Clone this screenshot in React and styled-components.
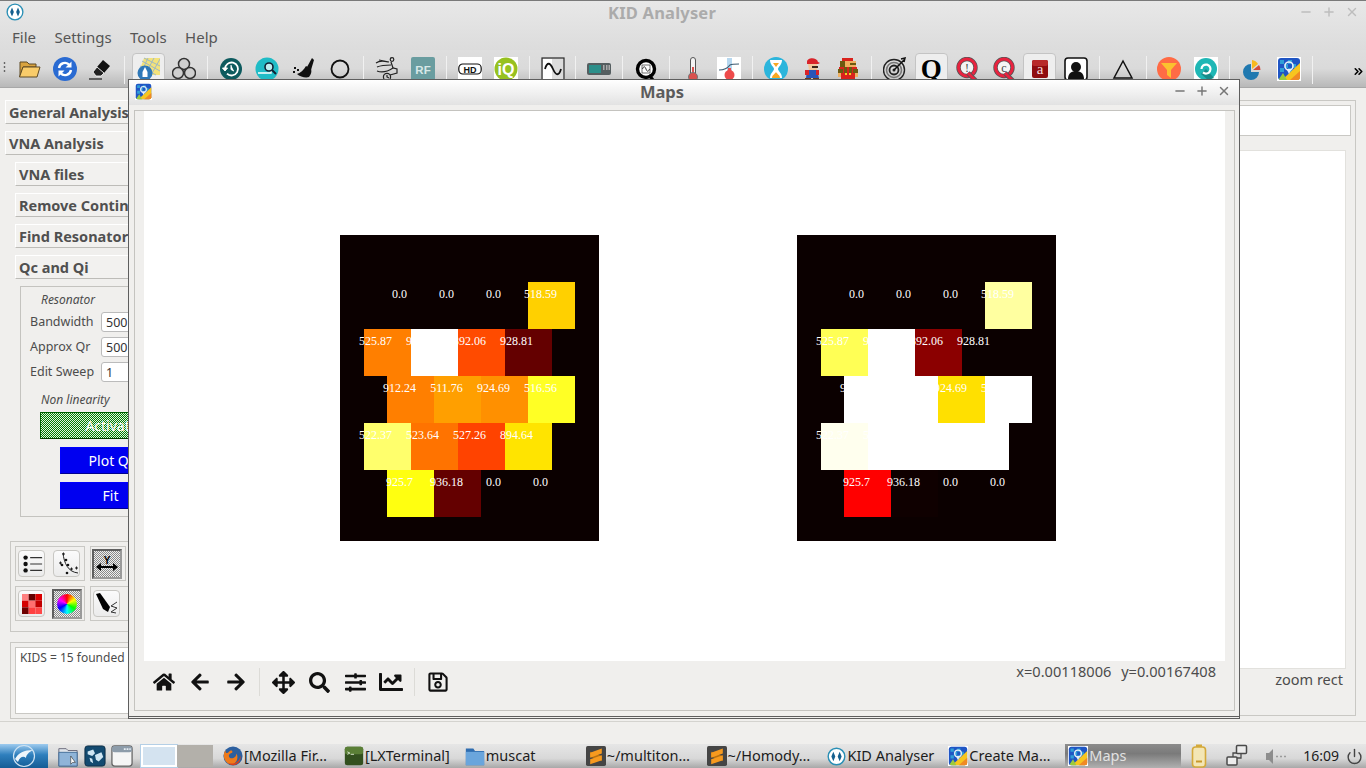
import React from "react";
import styled, { createGlobalStyle } from "styled-components";
import { Minus, Plus, X, ChevronsRight, Power } from "lucide-react";
import {
  FaHome,
  FaArrowLeft,
  FaArrowRight,
  FaArrowsAlt,
  FaSearch,
  FaSlidersH,
  FaChartLine,
  FaRegSave,
} from "react-icons/fa";

const Global = createGlobalStyle`
  html, body { margin: 0; padding: 0; overflow: hidden; background: #f0efed; }
  * { box-sizing: border-box; }
  body { font-family: "Noto Sans", "Open Sans", sans-serif; color: #4c4c4c; }
`;

const dither = (a, b) => `repeating-conic-gradient(${a} 0 25%, ${b} 0 50%) 0 0 / 2px 2px`;

// ---------- icons ----------

const Svg = ({ children, size = 24, vb = 24 }) => (
  <svg width={size} height={size} viewBox={`0 0 ${vb} ${vb}`}>
    {children}
  </svg>
);

const KidLogo = ({ size = 18 }) => (
  <Svg size={size}>
    <circle cx="12" cy="12" r="10.5" fill="#fff" stroke="#2a8fb5" strokeWidth="1.8" />
    <path d="M8 6l2.5 6L8 18l-2.5-6zM16 6l2.5 6-2.5 6-2.5-6z" fill="#15608f" />
  </Svg>
);

const MapLogo = ({ size = 24 }) => (
  <Svg size={size}>
    <rect x="0" y="0" width="24" height="24" fill="#fff" />
    <rect x="1" y="1" width="22" height="22" rx="3" fill="#1f55c4" />
    <path d="M3 3h4v4H3zM11 3h4v4h-4zM7 7h4v4H7zM15 7h4v4h-4zM3 11h4v4H3zM11 11h4v4h-4z" fill="#2f9fd6" />
    <path d="M23 6v14a3 3 0 0 1-3 3H5z" fill="#f7c51e" />
    <path d="M23 14v6a3 3 0 0 1-3 3h-7z" fill="#f08a24" />
    <path d="M2 22l4-6 4 7H3z" fill="#9ccb3b" />
    <circle cx="12" cy="9" r="4" fill="none" stroke="#e8eef8" strokeWidth="1.6" />
    <path d="M9.5 12l2.5 5 2.5-5z" fill="#e8eef8" />
  </Svg>
);

const FolderIcon = () => (
  <Svg>
    <path d="M3 5h7l2 2h7v3H6L3 20z" fill="#d9a33f" stroke="#5f4b25" />
    <path d="M6 10h17l-3 10H2.5z" fill="#f9cc6a" stroke="#5f4b25" />
  </Svg>
);

const RefreshIcon = () => (
  <Svg>
    <circle cx="12" cy="12" r="12" fill="#2a6bd2" />
    <path d="M6 11a6 6 0 0 1 10.5-3M18 13a6 6 0 0 1-10.5 3" fill="none" stroke="#fff" strokeWidth="2.4" />
    <path d="M18.5 4.500v6h-6zM5.500 19.500v-6h6z" fill="#fff" />
  </Svg>
);

const EraserIcon = () => (
  <Svg>
    <path d="M14 3l7 6-6 7-7-6z" fill="#111" />
    <path d="M8 10l7 6-3 3H7l-3-4z" fill="#222" stroke="#fff" strokeWidth="0.8" />
    <path d="M0 22h13" stroke="#333" strokeWidth="1.4" />
  </Svg>
);

const HexIcon = () => (
  <Svg>
    <path d="M8 1h16v17H2z" fill="#f3e27a" />
    <path d="M6 4l18 10M8 1l16 8M4 9l16 9M12 1L4 18M18 1L9 18M24 2l-9 16" stroke="#9fb8c4" strokeWidth="1" />
    <circle cx="9" cy="16" r="7.500" fill="#2f78b8" />
    <path d="M9 10l2.500 5v5h-5v-5z" fill="#fff" />
  </Svg>
);

const ThreeIcon = () => (
  <Svg>
    <g fill="#cfcfcf" stroke="#333" strokeWidth="1.5">
      <circle cx="12" cy="7" r="5.500" />
      <circle cx="6" cy="16" r="5.500" />
      <circle cx="18" cy="16" r="5.500" />
    </g>
  </Svg>
);

const HistoryIcon = () => (
  <Svg>
    <circle cx="12" cy="12" r="11" fill="#0d5a5e" />
    <path d="M6 12a6.500 6.500 0 1 1 2 4.700" fill="none" stroke="#fff" strokeWidth="1.8" />
    <path d="M3.500 11h5l-2.500 3zM12 8v4.500l3 1.500" fill="#fff" stroke="#fff" strokeWidth="1" />
  </Svg>
);

const LensIcon = () => (
  <Svg>
    <circle cx="12" cy="12" r="11.500" fill="#1fbcc6" />
    <path d="M3 16h13V7" fill="none" stroke="#fff" strokeWidth="1.400" />
    <circle cx="14" cy="10" r="4" fill="#bfeef0" stroke="#123" strokeWidth="1.600" />
    <path d="M17 13l4 4" stroke="#123" strokeWidth="2" />
  </Svg>
);

const BroomIcon = () => (
  <Svg>
    <path d="M20 1l-5 9 4 3 3-10z" fill="#111" />
    <path d="M14 9c-2 4-6 7-9 8 3 3 9 4 12 3 2-3 3-5 2-8z" fill="#111" />
    <path d="M2 10h2v2H2zM5 12h2v2H5zM1 14h2v2H1z" fill="#111" />
  </Svg>
);

const RingIcon = () => (
  <Svg>
    <circle cx="12" cy="12" r="8.500" fill="none" stroke="#111" strokeWidth="1.800" />
  </Svg>
);

const ScribbleIcon = () => (
  <Svg>
    <g fill="none" stroke="#222" strokeWidth="1.200">
      <path d="M1 6c4-3 8-2 12-1M2 10c5-2 9-2 14-2M4 3l10 2M2 14c5 2 10 1 16-3l4 1v4l-7 2" />
      <circle cx="17" cy="2.500" r="1.800" />
      <circle cx="12" cy="20" r="3.600" />
      <path d="M12 18v2l2 1M16 5l2 6" />
    </g>
  </Svg>
);

const RfIcon = () => (
  <Svg>
    <rect width="24" height="24" rx="2" fill="#6a9da0" />
    <text x="12" y="16.500" textAnchor="middle" fontFamily="Liberation Sans" fontWeight="700" fontSize="11.500" fill="#d8e8e8">
      RF
    </text>
  </Svg>
);

const HdIcon = () => (
  <Svg>
    <rect width="24" height="24" fill="#fff" />
    <rect x="0.800" y="7" width="22.400" height="10" rx="4" fill="none" stroke="#111" strokeWidth="1.200" />
    <text x="12" y="15.800" textAnchor="middle" fontFamily="Liberation Sans" fontWeight="700" fontSize="9" fill="#111">
      HD
    </text>
  </Svg>
);

const IqIcon = () => (
  <Svg>
    <rect width="24" height="24" fill="#fff" />
    <circle cx="12" cy="12" r="11.500" fill="#97c11f" />
    <text x="12" y="18" textAnchor="middle" fontFamily="Liberation Sans" fontWeight="700" fontSize="16" fill="#fff">
      iQ
    </text>
  </Svg>
);

const SineIcon = () => (
  <Svg>
    <rect width="24" height="24" fill="#fff" />
    <rect x="1" y="1" width="22" height="22" fill="none" stroke="#333" strokeWidth="1.400" />
    <rect x="11" y="2" width="11" height="20" fill="#dcdcdc" />
    <path d="M4 12c2-7 5-7 8 0s6 7 8 0" fill="none" stroke="#111" strokeWidth="1.800" />
  </Svg>
);

const ScopeIcon = () => (
  <Svg>
    <rect x="0" y="6" width="24" height="12" rx="2" fill="#555e60" />
    <rect x="2" y="8" width="12" height="8" fill="#2c8f8a" />
    <path d="M16 8h1.500v5H16zM19 8h1.500v5H19zM21.500 8H23v5h-1.500z" fill="#aaa" />
  </Svg>
);

const QSineIcon = () => (
  <Svg>
    <circle cx="12" cy="12" r="8.500" fill="#fff" stroke="#000" strokeWidth="3.400" />
    <path d="M15 18l4 5" stroke="#000" strokeWidth="3" />
    <rect x="8" y="8" width="8" height="8" fill="none" stroke="#333" strokeWidth="0.700" />
    <path d="M8.500 12c1-3 2.500-3 3.500 0s2.500 3 3.500 0" fill="none" stroke="#222" strokeWidth="0.900" />
  </Svg>
);

const ThermoIcon = () => (
  <Svg>
    <rect x="9.500" y="0.500" width="5" height="20" rx="2.500" fill="#f4f4f4" stroke="#555" />
    <rect x="11" y="10" width="2" height="10" fill="#d9514e" />
    <circle cx="12" cy="20" r="4.500" fill="#d9514e" stroke="#777" />
  </Svg>
);

const ThermoCurveIcon = () => (
  <Svg>
    <rect width="24" height="24" fill="#fff" />
    <rect x="10" y="1" width="5" height="14" fill="#b6d7ef" />
    <circle cx="12.500" cy="18" r="5" fill="#ee4b4b" />
    <rect x="11" y="11" width="3" height="6" fill="#ee4b4b" />
    <path d="M2 13c5 0 8-1 11-5 2-1 5-1 9-1" fill="none" stroke="#3a5a70" strokeWidth="1.200" />
  </Svg>
);

const HourglassIcon = () => (
  <Svg>
    <circle cx="12" cy="12" r="12" fill="#2cb5dc" />
    <path d="M6 3h12c0 5-4 7-4 9s4 4 4 9H6c0-5 4-7 4-9s-4-4-4-9z" fill="#fff" />
    <path d="M8 21c0-3 3-4 4-6 1 2 4 3 4 6zM9 6h6l-3 4z" fill="#f7a823" />
  </Svg>
);

const MarioIcon = () => (
  <Svg>
    <path d="M7 5c0-5 10-5 11 0l2 1-2 1H7z" fill="#d8232a" />
    <path d="M8 7h9v6H9z" fill="#f3c79c" />
    <path d="M12 9h6v2h-6z" fill="#3a241a" />
    <path d="M7 13h10l2 8H6z" fill="#2a55b8" />
    <path d="M5 13h4v5H5zM16 13h3v5h-3z" fill="#d8232a" />
    <path d="M5 21h6v3H5zM13 21h6v3h-6z" fill="#6a3a1a" />
  </Svg>
);

const PixelMarioIcon = () => (
  <Svg>
    <path d="M6 1h11v3H6zM3 10h18v8H3zM5 18h14v6H5z" fill="#d9221c" />
    <path d="M6 4h14v6H6z" fill="#f0b060" />
    <path d="M4 4h5v6H4zM14 6h6v2h-6z" fill="#6d5a10" />
    <path d="M8 10h3v6H8zM13 10h3v6h-3zM2 12h5v4H2zM17 12h5v4h-5z" fill="#6d5a10" />
    <path d="M2 16h3v4H2zM19 16h3v4h-3z" fill="#f0b060" />
    <path d="M9 16h2v2H9zM13 16h2v2h-2z" fill="#f5d020" />
  </Svg>
);

const TargetIcon = () => (
  <Svg>
    <g fill="none" stroke="#222">
      <circle cx="11" cy="13" r="10.500" strokeWidth="1.400" />
      <circle cx="11" cy="13" r="7.500" strokeWidth="1.600" stroke="#777" />
      <circle cx="11" cy="13" r="4.500" strokeWidth="1.800" />
    </g>
    <circle cx="11" cy="13" r="1.500" fill="#222" />
    <path d="M11 13L21 3M18 2l4-1-1 4" fill="none" stroke="#111" strokeWidth="1.500" />
  </Svg>
);

const SerifQ = styled.div`
  position: relative;
  font-family: "Liberation Serif", serif;
  font-weight: 700;
  font-size: 27px;
  line-height: 24px;
  color: #000;
`;

const RedQIcon = ({ letter }) => (
  <Svg>
    <circle cx="12" cy="10.500" r="8.500" fill="#f4f4f4" stroke="#555" strokeWidth="4.400" />
    <circle cx="12" cy="10.500" r="8.500" fill="none" stroke="#e8233f" strokeWidth="3" />
    <path d="M13 16l8 8" stroke="#555" strokeWidth="4.600" />
    <path d="M13 16l8 8" stroke="#e8233f" strokeWidth="3" />
    <text x="12" y="15" textAnchor="middle" fontFamily="Liberation Serif" fontSize="12" fill="#444">
      {letter}
    </text>
  </Svg>
);

const AppAIcon = () => (
  <Svg>
    <rect x="4" y="3" width="16" height="18" rx="2" fill="#8f0d10" />
    <rect x="4" y="3" width="16" height="6" rx="2" fill="#b82a2a" />
    <text x="12" y="17" textAnchor="middle" fontFamily="Liberation Serif" fontSize="15" fill="#f4dcdc">
      a
    </text>
  </Svg>
);

const PersonIcon = () => (
  <Svg>
    <rect x="1" y="1" width="22" height="22" rx="3" fill="#fff" stroke="#111" strokeWidth="1.600" />
    <circle cx="12" cy="10" r="5" fill="#111" />
    <path d="M4 22c0-6 4-8 8-8s8 2 8 8z" fill="#111" />
  </Svg>
);

const TriangleIcon = () => (
  <Svg>
    <path d="M12 4L3 21h18z" fill="none" stroke="#111" strokeWidth="1.500" />
  </Svg>
);

const FunnelIcon = () => (
  <Svg>
    <circle cx="12" cy="12" r="12" fill="#ff6b45" />
    <path d="M4 6h16l-6 7v8l-4-3v-5z" fill="#fbc12f" />
  </Svg>
);

const TealRefreshIcon = () => (
  <Svg>
    <rect width="24" height="24" fill="#fff" />
    <circle cx="12" cy="12" r="11" fill="#1fb7b5" />
    <path d="M12 12l8 9-6 2-7-6z" fill="#178c8a" />
    <path d="M7.500 12a4.500 4.500 0 1 1 1.500 3.400" fill="none" stroke="#fff" strokeWidth="2.200" />
  </Svg>
);

const PieIcon = () => (
  <Svg>
    <path d="M11 7a8 8 0 1 0 8 8h-8z" fill="#2079b0" />
    <path d="M12 3v9l6-5a8 8 0 0 0-6-4z" fill="#f7b81f" />
    <path d="M13 13l6-5a8 8 0 0 1 1.500 5z" fill="#d34a3a" />
  </Svg>
);

const ToolListIcon = () => (
  <Svg size={22}>
    <circle cx="5" cy="5" r="2.400" fill="#111" />
    <circle cx="5" cy="12" r="2.400" fill="#111" />
    <circle cx="5" cy="19" r="2.400" fill="#111" />
    <path d="M10 5h13M10 12h13M10 19h13" stroke="#333" strokeWidth="1.300" />
  </Svg>
);

const ToolScatterIcon = () => (
  <Svg size={24}>
    <path d="M8 1c1 10 5 19 15 20" fill="none" stroke="#222" />
    <path d="M4 11h3M5.500 9.500v3M15 17h3M16.500 15.500v3M20 16h3M21.500 14.500v3M7 2h3M8.500 0.500v3" stroke="#222" />
    <circle cx="11" cy="8" r="1.300" fill="#111" />
    <circle cx="7" cy="13" r="1.300" fill="#111" />
    <circle cx="13" cy="13" r="1.300" fill="#111" />
    <circle cx="12" cy="21" r="1.300" fill="#111" />
  </Svg>
);

const ToolYIcon = () => (
  <Svg size={24}>
    <path d="M2 15h20" stroke="#000" strokeWidth="2" />
    <path d="M1 15l5-4v8zM23 15l-5-4v8z" fill="#000" />
    <text x="12" y="11.500" textAnchor="middle" fontFamily="Liberation Sans" fontWeight="700" fontSize="10" fill="#000">
      Y
    </text>
  </Svg>
);

const ToolPixelsIcon = () => {
  const colors = ["#ff8080", "#640000", "#d90000", "#d40000", "#ff7070", "#c00000", "#6e0000", "#ff4040", "#ff4848"];
  return (
    <Svg size={20} vb={21}>
      {colors.map((c, i) => (
        <rect key={i} x={(i % 3) * 7} y={Math.floor(i / 3) * 7} width="7" height="7" fill={c} />
      ))}
    </Svg>
  );
};

const ToolPenIcon = () => (
  <Svg size={24}>
    <path d="M1 2l4-1 10 14-2 5-5-3z" fill="#000" />
    <path d="M22 10l-6 4 6 2-6 4 5 1" fill="none" stroke="#333" />
  </Svg>
);

const StartIcon = () => (
  <Svg size={24}>
    <circle cx="12" cy="12" r="10.500" fill="none" stroke="#cfe3f3" strokeWidth="1.200" />
    <path d="M3 15c3-6 9-9 18-9-4 2-7 5-7 8-2-2-6-2-8 4z" fill="#eef5fb" />
  </Svg>
);

const FilesIcon = () => (
  <Svg size={22}>
    <path d="M2 4h8l2 2h10v17H2z" fill="#dfe4ea" stroke="#667" />
    <path d="M2 8h20v15H2z" fill="#8fb4d8" stroke="#3e6a96" />
    <path d="M15 12v9l2-2 3 0z" fill="#fff" stroke="#333" strokeWidth="0.700" />
  </Svg>
);

const GlobeIcon = () => (
  <Svg size={22}>
    <rect x="1" y="1" width="22" height="22" rx="3" fill="#134a70" stroke="#0c2c44" />
    <path d="M4 7l6-2 2 4-3 3-5-2zM12 11l7-3 2 5-5 5-3-2zM6 14l3 1 1 5-3-2z" fill="#cfe6f4" />
  </Svg>
);

const WindowIcon = () => (
  <Svg size={22}>
    <rect x="1" y="1" width="22" height="22" rx="3" fill="#f5f5f5" stroke="#666" strokeWidth="1.400" />
    <rect x="1" y="1" width="22" height="7" rx="3" fill="#8d9caa" />
    <path d="M14 3.500h2v2h-2zM17 3.500h2v2h-2zM20 3.500h1.500v2H20z" fill="#e8eef4" />
  </Svg>
);

const FirefoxIcon = () => (
  <Svg size={20}>
    <circle cx="12" cy="12" r="11.500" fill="#2c5f9f" />
    <path d="M3 5c0 5 2 3 3 3 4-5 6-2 5 0-4 1-5 4-3 6 3 2 8 0 8-5 3 4 1 13-6 13C3 22-2 12 3 5z" fill="#ef7a1a" />
    <path d="M6 20c6 3 14 0 15-9 1 7-3 12-9 12-2 0-4-1-6-3z" fill="#d9411a" />
  </Svg>
);

const TerminalIcon = () => (
  <Svg size={20}>
    <rect x="1" y="1" width="22" height="22" rx="3" fill="#33501f" />
    <rect x="1" y="1" width="22" height="9" rx="3" fill="#5a7f36" />
    <path d="M4 7l3 1.500L4 10M8 10h4" fill="none" stroke="#e8f2df" />
  </Svg>
);

const PlaceIcon = () => (
  <Svg size={20}>
    <path d="M1 3h9l2 3h11v17H1z" fill="#2f6db0" />
    <path d="M1 7h22v16H1z" fill="#6aa5dc" />
  </Svg>
);

const SublimeIcon = () => (
  <Svg size={20}>
    <rect width="24" height="24" rx="2" fill="#454545" />
    <path d="M5 7v6l14 5v-6z" fill="#b8700f" />
    <path d="M5 8l14-5v6L5 14z" fill="#f79a1f" />
    <path d="M5 16l14-5v6L5 22z" fill="#f79a1f" />
  </Svg>
);

const BatteryIcon = () => (
  <Svg size={24}>
    <rect x="9" y="0.500" width="6" height="3" fill="#d4a93a" />
    <rect x="5.500" y="3" width="13" height="20" rx="3" fill="#f3e6b5" stroke="#d4a93a" strokeWidth="1.600" />
    <rect x="9" y="16.500" width="6" height="2" fill="#c9982a" />
  </Svg>
);

const NetworkIcon = () => (
  <Svg size={24}>
    <rect x="11.500" y="1.500" width="10" height="8" rx="1" fill="#ececec" stroke="#4a4a4a" strokeWidth="1.500" />
    <rect x="2" y="13" width="10" height="8" rx="1" fill="#ececec" stroke="#4a4a4a" strokeWidth="1.500" />
    <path d="M8 13V9h4M16 9.500V14h-4" fill="none" stroke="#4a4a4a" strokeWidth="1.300" />
  </Svg>
);

const VolumeIcon = () => (
  <Svg size={24}>
    <path d="M3 9h3l4-4v15l-4-4H3z" fill="#8d8d8d" />
    <path d="M13 12.500h2M17 12.500h2M21 12.500h2" stroke="#9b9b9b" strokeWidth="1.400" />
  </Svg>
);

// ---------- data ----------

const toolbarItems = [
  { icon: <FolderIcon /> },
  { icon: <RefreshIcon /> },
  { icon: <EraserIcon /> },
  "sep",
  { icon: <HexIcon />, active: true },
  { icon: <ThreeIcon /> },
  "sep",
  { icon: <HistoryIcon /> },
  { icon: <LensIcon /> },
  { icon: <BroomIcon /> },
  { icon: <RingIcon /> },
  "sep",
  { icon: <ScribbleIcon /> },
  { icon: <RfIcon /> },
  "sep",
  { icon: <HdIcon /> },
  { icon: <IqIcon /> },
  "sep",
  { icon: <SineIcon /> },
  "sep",
  { icon: <ScopeIcon /> },
  "sep",
  { icon: <QSineIcon /> },
  "sep",
  { icon: <ThermoIcon /> },
  { icon: <ThermoCurveIcon /> },
  "sep",
  { icon: <HourglassIcon /> },
  { icon: <MarioIcon /> },
  { icon: <PixelMarioIcon /> },
  "sep",
  { icon: <TargetIcon /> },
  { icon: <SerifQ>Q</SerifQ>, active: true },
  { icon: <RedQIcon letter="!" /> },
  { icon: <RedQIcon letter="c" /> },
  { icon: <AppAIcon />, active: true },
  { icon: <PersonIcon /> },
  "sep",
  { icon: <TriangleIcon /> },
  "sep",
  { icon: <FunnelIcon /> },
  { icon: <TealRefreshIcon /> },
  "sep",
  { icon: <PieIcon /> },
  { icon: <MapLogo /> },
  "sep",
];

const labels = [
  ["0.0", "0.0", "0.0", "518.59"],
  ["525.87", "9", "892.06", "928.81"],
  ["912.24", "511.76", "924.69", "516.56"],
  ["522.37", "523.64", "527.26", "894.64"],
  ["925.7", "936.18", "0.0", "0.0"],
];

const leftColors = [
  ["#0b0000", "#0b0000", "#0b0000", "#ffd000"],
  ["#ff7f00", "#ffffff", "#ff4b00", "#640000"],
  ["#ff7f00", "#ff9f00", "#ff9000", "#ffff25"],
  ["#ffff6c", "#ff7300", "#ff4300", "#ffe400"],
  ["#ffff10", "#640000", "#0b0000", "#0b0000"],
];

const rightColors = [
  ["#0b0000", "#0b0000", "#0b0000", "#ffffa0"],
  ["#ffff55", "#ffffff", "#8b0000", "#0b0000"],
  ["#ffffff", "#ffffff", "#ffe000", "#ffffff"],
  ["#ffffee", "#ffffff", "#ffffff", "#ffffff"],
  ["#ff0000", "#0f0000", "#0b0000", "#0b0000"],
];

const tasks = [
  { icon: <FirefoxIcon />, label: "[Mozilla Fir…" },
  { icon: <TerminalIcon />, label: "[LXTerminal]" },
  { icon: <PlaceIcon />, label: "muscat" },
  { icon: <SublimeIcon />, label: "~/multiton…" },
  { icon: <SublimeIcon />, label: "~/Homody…" },
  { icon: <KidLogo size={19} />, label: "KID Analyser" },
  { icon: <MapLogo size={20} />, label: "Create Ma…" },
  { icon: <MapLogo size={20} />, label: "Maps", active: true },
];

// ---------- main window ----------

const Desktop = styled.div`
  position: relative;
  width: 1366px;
  height: 768px;
  display: flex;
  flex-direction: column;
  overflow: hidden;
  background: #f0efed;
`;

const Header = styled.div`
  background: linear-gradient(#e8e8e8, #dcdcdc);
  border-top: 1px solid #7a7a7a;
`;

const TitleBar = styled.div`
  height: 22px;
  display: flex;
  align-items: center;
  padding-left: 6px;
  position: relative;
`;

const AppTitle = styled.div`
  position: absolute;
  left: 0;
  right: 42px;
  text-align: center;
  font-weight: 700;
  font-size: 16.500px;
  color: #ababab;
  letter-spacing: 0.2px;
`;

const WindowButtons = styled.div`
  margin-left: auto;
  display: flex;
  gap: ${({ $gap }) => $gap}px;
  padding-right: ${({ $right }) => $right}px;
  color: ${({ $color }) => $color};
  align-items: center;
`;

const MenuBar = styled.div`
  height: 27px;
  display: flex;
  align-items: center;
  padding-left: 12px;
  gap: 18.500px;
  font-size: 15px;
  color: #555;
`;

const ToolBar = styled.div`
  height: 38px;
  display: flex;
  align-items: flex-start;
  padding-top: 3px;
  background: linear-gradient(#dedede, #dadada 50%, #b8b8b8);
  border-bottom: 1px solid #a8a8a8;
  position: relative;
`;

const Grip = styled.div`
  width: 3px;
  margin: 8px 5px 0 3px;
  height: 12px;
  flex: none;
  background: radial-gradient(circle, #666 0.8px, transparent 1.2px) 0 0 / 3px 4px;
`;

const ToolCell = styled.div`
  width: 36.200px;
  height: 34px;
  flex: none;
  display: flex;
  justify-content: center;
  padding-top: 4px;
  position: relative;
  &::before {
    content: "";
    display: ${({ $active }) => ($active ? "block" : "none")};
    position: absolute;
    left: 1.500px;
    right: 1.500px;
    top: 0;
    bottom: 0;
    background: #eeeeee;
    border: 1px solid #c4c4c4;
    border-radius: 4px;
  }
  & > svg {
    position: relative;
  }
`;

const ToolSep = styled.div`
  width: 10.600px;
  flex: none;
  height: 28px;
  margin-top: 3px;
  display: flex;
  justify-content: center;
  &::after {
    content: "";
    width: 1px;
    background: #f1f1f1;
  }
`;

const Overflow = styled.div`
  position: absolute;
  right: 1px;
  top: 11px;
  color: #000;
`;

const Content = styled.div`
  flex: none;
  height: 634px;
  display: flex;
  justify-content: space-between;
  border-bottom: 1px solid #d4d3cf;
`;

// ---------- left panel ----------

const LeftPanel = styled.div`
  width: 260px;
  padding: 12px 0 0 5px;
  display: flex;
  flex-direction: column;
  gap: 7px;
`;

const SectionButton = styled.div`
  height: 24px;
  margin-left: ${({ $indent }) => $indent || 0}px;
  padding-left: 3px;
  display: flex;
  align-items: center;
  font-size: 14.500px;
  font-weight: 700;
  color: #505050;
  white-space: nowrap;
  background: #f2f1ef;
  border-left: 1px solid #fff;
  border-top: 1px solid #fff;
  border-bottom: 1px solid #bdbcb8;
`;

const GroupBox = styled.div`
  margin-left: 15px;
  width: 200px;
  height: 231px;
  border: 1px solid #c4c3bf;
  display: flex;
  flex-direction: column;
  padding: 5px 0 0 9px;
`;

const Legend = styled.div`
  font-style: italic;
  font-size: 12px;
  line-height: 15px;
  color: #4c4c4c;
  margin-left: 11px;
  margin-top: ${({ $top }) => $top || 0}px;
`;

const Field = styled.div`
  display: flex;
  align-items: center;
  height: 20px;
  margin-top: ${({ $top }) => $top}px;
  font-size: 12.500px;
  color: #4c4c4c;
`;

const FieldLabel = styled.div`
  width: 71px;
  flex: none;
  white-space: nowrap;
  margin-top: -1px;
`;

const FieldInput = styled.div`
  width: 80px;
  height: 20px;
  background: #fff;
  border: 1px solid #bbb;
  border-radius: 3px;
  padding-left: 4px;
  line-height: 19px;
  color: #333;
  font-size: 12.500px;
`;

const ActionButton = styled.div`
  height: 27px;
  margin-left: ${({ $left }) => $left}px;
  margin-top: ${({ $top }) => $top}px;
  width: ${({ $width }) => $width}px;
  display: flex;
  align-items: center;
  justify-content: center;
  color: #fff;
  font-size: 14px;
  padding-bottom: 1px;
  background: ${({ $green }) => ($green ? dither("#008000", "#e0f0e0") : "#0000f0")};
  border-top: 1px solid ${({ $green }) => ($green ? "#006000" : "#0000ff")};
  border-left: 1px solid ${({ $green }) => ($green ? "#006000" : "#0000ff")};
  border-bottom: 1px solid ${({ $green }) => ($green ? "#004000" : "#000090")};
`;

const ToolsBox = styled.div`
  margin: 17px 0 0 5px;
  width: 200px;
  height: 91px;
  border: 1px solid #c9c8c4;
  padding: 4px;
  display: flex;
  flex-direction: column;
  gap: 5px;
`;

const ToolsRow = styled.div`
  display: flex;
  gap: 5px;
`;

const ToolsCell = styled.div`
  width: ${({ $width }) => $width}px;
  height: 35px;
  border: 1px solid #c9c8c4;
  display: flex;
  align-items: center;
  padding-left: ${({ $pad }) => $pad}px;
  gap: ${({ $gap }) => $gap || 0}px;
`;

const IconButton = styled.div`
  width: ${({ $checked }) => ($checked ? 30 : 27)}px;
  height: ${({ $checked }) => ($checked ? 30 : 27)}px;
  flex: none;
  display: flex;
  align-items: center;
  justify-content: center;
  border-radius: ${({ $checked }) => ($checked ? 0 : 4)}px;
  background: ${({ $checked }) => ($checked ? dither("#8a8a8a", "#efefef") : "linear-gradient(#fbfbfb, #ebebeb)")};
  border: ${({ $checked }) => ($checked ? "2px solid #5f5f5f" : "1px solid #c8c7c3")};
  border-right-color: ${({ $checked }) => ($checked ? "#9a9a9a" : "#c8c7c3")};
  border-bottom-color: ${({ $checked }) => ($checked ? "#9a9a9a" : "#c8c7c3")};
`;

const ColorWheel = styled.div`
  width: 20px;
  height: 20px;
  border-radius: 50%;
  background: conic-gradient(#ff0000, #ffff00, #00ff00, #00ffff, #0000ff, #ff00ff, #ff0000);
`;

const LogBox = styled.div`
  margin: 3px 0 0 5px;
  width: 200px;
  height: 77px;
  border: 1px solid #c9c8c4;
  padding: 4px;
`;

const LogText = styled.div`
  height: 100%;
  background: #fff;
  border: 1px solid #c9c8c4;
  padding: 2px 4px;
  font-size: 12px;
  line-height: 16px;
  color: #4c4c4c;
  white-space: nowrap;
`;

// ---------- right panel ----------

const RightPanel = styled.div`
  width: 200px;
  margin: 12px 10px 5px 0;
  border: 1px solid #c9c8c4;
  border-left: none;
  padding: 4px 4px 0 0;
  display: flex;
  flex-direction: column;
`;

const TopInput = styled.div`
  height: 31px;
  background: #fff;
  border: 1px solid #c9c8c4;
`;

const PlotArea = styled.div`
  margin-top: 14px;
  margin-right: 5px;
  height: 519px;
  background: #fff;
  border: 1px solid #e2e1dd;
`;

const ZoomStatus = styled.div`
  text-align: right;
  padding-right: 8px;
  margin-top: 1px;
  font-size: 14.500px;
  line-height: 18px;
  color: #4c4c4c;
`;

// ---------- maps window ----------

const MapsWindow = styled.div`
  position: absolute;
  left: 128px;
  top: 79px;
  width: 1112px;
  height: 640px;
  background: #f0efed;
  border: 1px solid #5e5e5e;
  border-bottom: 3px double #5e5e5e;
  display: flex;
  flex-direction: column;
`;

const MapsTitle = styled.div`
  height: 25px;
  flex: none;
  display: flex;
  align-items: center;
  padding: 0 0 3px 6px;
  position: relative;
  background: linear-gradient(#ffffff, #e2e2e2);
`;

const MapsHeading = styled.div`
  position: absolute;
  left: 0;
  right: 44px;
  text-align: center;
  font-weight: 700;
  font-size: 16.500px;
  color: #5c5c5c;
`;

const MapsFrame = styled.div`
  margin: 5px 4px 5px 5px;
  flex: 1;
  border: 1px solid #c4c3bf;
  border-bottom-width: 1px;
  padding: 0 9px;
  display: flex;
  flex-direction: column;
`;

const Canvas = styled.div`
  height: 550px;
  flex: none;
  background: #fff;
  display: flex;
  align-items: flex-start;
  padding: 124px 0 0 196px;
  gap: 198px;
`;

const NavBar = styled.div`
  flex: 1;
  display: flex;
  align-items: center;
  padding: 0 0 7px 2px;
`;

const NavCell = styled.div`
  width: 36px;
  flex: none;
  display: flex;
  justify-content: center;
  color: #111;
`;

const NavSep = styled.div`
  width: 1px;
  height: 28px;
  margin: 0 5px;
  background: #dcdbd7;
  flex: none;
`;

const Coords = styled.div`
  margin-left: auto;
  align-self: flex-start;
  margin-top: 1px;
  padding-right: 9px;
  font-size: 14.600px;
  line-height: 18px;
  color: #4c4c4c;
  word-spacing: 6px;
`;

// ---------- taskbar ----------

const TaskBar = styled.div`
  position: absolute;
  left: 0;
  right: 0;
  bottom: 0;
  height: 24px;
  display: flex;
  align-items: center;
  background: linear-gradient(#e6e6e6, #d8d8d8 60%, #a8a8a8);
`;

const StartButton = styled.div`
  width: 48px;
  height: 100%;
  flex: none;
  display: flex;
  align-items: center;
  justify-content: center;
  background: linear-gradient(#9ecbef, #2f7fbd 45%, #155c95);
`;

const Launchers = styled.div`
  display: flex;
  gap: 5px;
  padding: 0 7px 0 9px;
  width: 93px;
  flex: none;
  align-items: center;
`;

const Pager = styled.div`
  display: flex;
  width: 78px;
  height: 100%;
  flex: none;
  padding: 1px 0;
`;

const PagerDesk = styled.div`
  width: 36px;
  flex: none;
  background: ${({ $active }) => ($active ? "#d4e3f0" : "#b3b0aa")};
  border: ${({ $active }) => ($active ? "2px solid #ffffff" : "none")};
  outline: ${({ $active }) => ($active ? "1px solid #b4cfe6" : "none")};
`;

const Task = styled.div`
  width: ${({ $active }) => ($active ? 116 : 120.9)}px;
  height: 100%;
  flex: none;
  display: flex;
  align-items: center;
  gap: 1px;
  padding: 0 0 2px ${({ $active }) => ($active ? 3 : 4)}px;
  font-size: 14.500px;
  white-space: nowrap;
  color: ${({ $active }) => ($active ? "#e2e2e2" : "#1c1c1c")};
  background: ${({ $active }) => ($active ? "linear-gradient(#8c8c8c, #7a7a7a 40%, #b0b0b0)" : "transparent")};
  & > svg {
    margin-top: 2px;
  }
`;

const Tray = styled.div`
  margin-left: auto;
  display: flex;
  align-items: center;
  gap: 14px;
  padding-right: 3px;
`;

const Clock = styled.div`
  font-size: 14px;
  color: #1c1c1c;
  margin-left: 2px;
  margin-bottom: 1px;
`;

const TrayPower = styled.div`
  display: flex;
  margin-left: -7px;
  color: #444;
`;

// ---------- heat map ----------

const HeatLabel = styled.text`
  font-family: "Liberation Serif", serif;
  font-size: 12px;
  fill: #ffffff;
`;

const HeatMap = ({ colors }) => (
  <svg width="259" height="306" viewBox="0 0 259 306">
    <rect width="259" height="306" fill="#0b0000" />
    {colors.map((row, r) =>
      row.map((color, c) => (
        <rect key={`${r}-${c}`} x={(r % 2 ? 24 : 47) + c * 47} y={47 + r * 47} width="47" height="47" fill={color} />
      ))
    )}
    {labels.map((row, r) =>
      row.map((text, c) => (
        <HeatLabel
          key={`${r}-${c}`}
          x={(r % 2 ? 35.5 : 59.5) + c * 47 + (text === "9" ? -13.5 : 0)}
          y={63 + r * 47}
          textAnchor="middle"
        >
          {text}
        </HeatLabel>
      ))
    )}
  </svg>
);

const App = () => (
  <Desktop>
    <Global />
    <Header>
      <TitleBar>
        <KidLogo />
        <AppTitle>KID Analyser</AppTitle>
        <WindowButtons $gap={9} $right={7} $color="#bdbdbd">
          <Minus size={14} strokeWidth={2.5} />
          <Plus size={14} strokeWidth={2.5} />
          <X size={14} strokeWidth={2.5} />
        </WindowButtons>
      </TitleBar>
      <MenuBar>
        <span>File</span>
        <span>Settings</span>
        <span>Tools</span>
        <span>Help</span>
      </MenuBar>
    </Header>

    <ToolBar>
      <Grip />
      {toolbarItems.map((item, i) =>
        item === "sep" ? (
          <ToolSep key={i} />
        ) : (
          <ToolCell key={i} $active={item.active}>
            {item.icon}
          </ToolCell>
        )
      )}
      <Overflow>
        <ChevronsRight size={13} strokeWidth={3} />
      </Overflow>
    </ToolBar>

    <Content>
      <LeftPanel>
        <SectionButton>General Analysis</SectionButton>
        <SectionButton>VNA Analysis</SectionButton>
        <SectionButton $indent={10}>VNA files</SectionButton>
        <SectionButton $indent={10}>Remove Continuum</SectionButton>
        <SectionButton $indent={10}>Find Resonators</SectionButton>
        <SectionButton $indent={10}>Qc and Qi</SectionButton>
        <GroupBox>
          <Legend>Resonator</Legend>
          <Field $top={5}>
            <FieldLabel>Bandwidth</FieldLabel>
            <FieldInput>500</FieldInput>
          </Field>
          <Field $top={5}>
            <FieldLabel>Approx Qr</FieldLabel>
            <FieldInput>500</FieldInput>
          </Field>
          <Field $top={5}>
            <FieldLabel>Edit Sweep</FieldLabel>
            <FieldInput>1</FieldInput>
          </Field>
          <Legend $top={10}>Non linearity</Legend>
          <ActionButton $green $left={10} $top={5} $width={142}>
            Activate
          </ActionButton>
          <ActionButton $left={30} $top={8} $width={100}>
            Plot Qi
          </ActionButton>
          <ActionButton $left={30} $top={8} $width={100}>
            Fit
          </ActionButton>
        </GroupBox>
        <ToolsBox>
          <ToolsRow>
            <ToolsCell $width={70} $pad={2} $gap={8}>
              <IconButton>
                <ToolListIcon />
              </IconButton>
              <IconButton>
                <ToolScatterIcon />
              </IconButton>
            </ToolsCell>
            <ToolsCell $width={36} $pad={1}>
              <IconButton $checked>
                <ToolYIcon />
              </IconButton>
            </ToolsCell>
          </ToolsRow>
          <ToolsRow>
            <ToolsCell $width={70} $pad={2} $gap={7}>
              <IconButton>
                <ToolPixelsIcon />
              </IconButton>
              <IconButton $checked>
                <ColorWheel />
              </IconButton>
            </ToolsCell>
            <ToolsCell $width={60} $pad={2}>
              <IconButton>
                <ToolPenIcon />
              </IconButton>
            </ToolsCell>
          </ToolsRow>
        </ToolsBox>
        <LogBox>
          <LogText>KIDS = 15 founded</LogText>
        </LogBox>
      </LeftPanel>
      <RightPanel>
        <TopInput />
        <PlotArea />
        <ZoomStatus>zoom rect</ZoomStatus>
      </RightPanel>
    </Content>

    <MapsWindow>
      <MapsTitle>
        <MapLogo size={17} />
        <MapsHeading>Maps</MapsHeading>
        <WindowButtons $gap={8} $right={8} $color="#777">
          <Minus size={14} strokeWidth={2.5} />
          <Plus size={14} strokeWidth={2.5} />
          <X size={14} strokeWidth={2.5} />
        </WindowButtons>
      </MapsTitle>
      <MapsFrame>
        <Canvas>
          <HeatMap colors={leftColors} />
          <HeatMap colors={rightColors} />
        </Canvas>
        <NavBar>
          <NavCell>
            <FaHome size={22} />
          </NavCell>
          <NavCell>
            <FaArrowLeft size={20} />
          </NavCell>
          <NavCell>
            <FaArrowRight size={20} />
          </NavCell>
          <NavSep />
          <NavCell>
            <FaArrowsAlt size={23} />
          </NavCell>
          <NavCell>
            <FaSearch size={21} />
          </NavCell>
          <NavCell>
            <FaSlidersH size={21} />
          </NavCell>
          <NavCell>
            <FaChartLine size={24} />
          </NavCell>
          <NavSep />
          <NavCell>
            <FaRegSave size={22} />
          </NavCell>
          <Coords>x=0.00118006 y=0.00167408</Coords>
        </NavBar>
      </MapsFrame>
    </MapsWindow>

    <TaskBar>
      <StartButton>
        <StartIcon />
      </StartButton>
      <Launchers>
        <FilesIcon />
        <GlobeIcon />
        <WindowIcon />
      </Launchers>
      <Pager>
        <PagerDesk $active />
        <PagerDesk />
      </Pager>
      {tasks.map((task) => (
        <Task key={task.label} $active={task.active}>
          {task.icon}
          <span>{task.label}</span>
        </Task>
      ))}
      <Tray>
        <BatteryIcon />
        <NetworkIcon />
        <VolumeIcon />
        <Clock>16:09</Clock>
        <TrayPower>
          <Power size={17} strokeWidth={2} />
        </TrayPower>
      </Tray>
    </TaskBar>
  </Desktop>
);

export default App;
